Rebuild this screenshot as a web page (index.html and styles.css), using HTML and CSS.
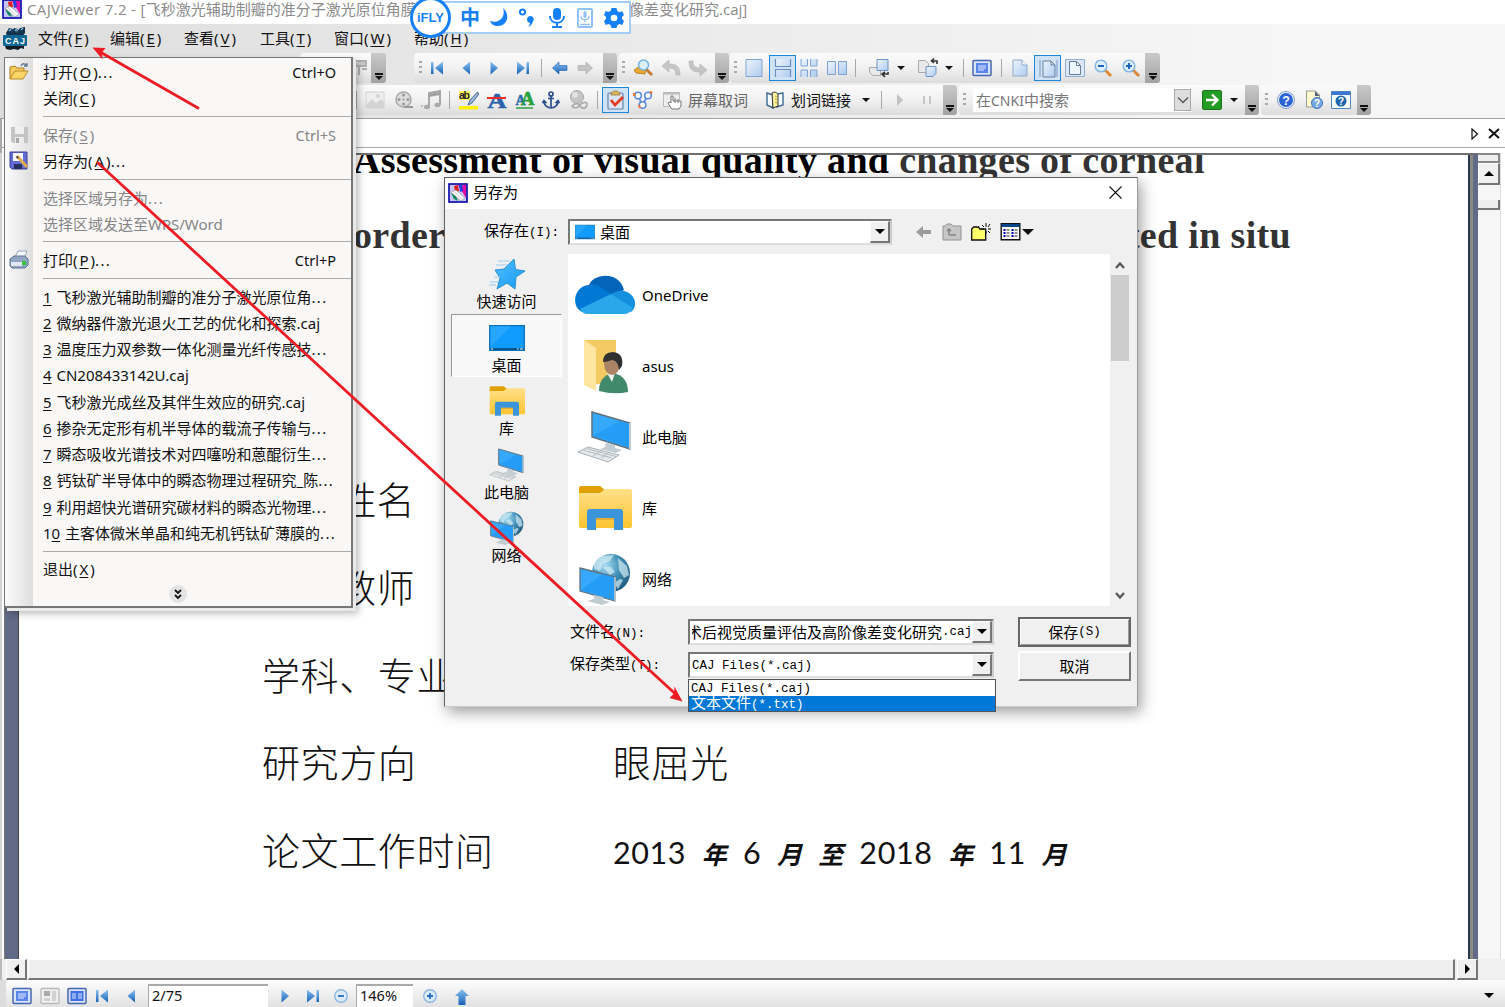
FILE: index.html
```html
<!DOCTYPE html>
<html lang="zh-CN">
<head>
<meta charset="utf-8">
<title>CAJViewer 7.2</title>
<link rel="stylesheet" href="styles.css">
</head>
<body>
<svg class="defs" width="0" height="0">
<defs>
<linearGradient id="gb" x1="0" y1="0" x2="0" y2="1"><stop offset="0" stop-color="#8cc4f0"/><stop offset="1" stop-color="#1560b8"/></linearGradient>
<linearGradient id="gp" x1="0" y1="0" x2="1" y2="1"><stop offset="0" stop-color="#eef5fd"/><stop offset="1" stop-color="#aecbee"/></linearGradient>
<linearGradient id="gy" x1="0" y1="0" x2="0" y2="1"><stop offset="0" stop-color="#ffe08a"/><stop offset="1" stop-color="#fcc42f"/></linearGradient>
<linearGradient id="gs" x1="0" y1="0" x2="1" y2="1"><stop offset="0" stop-color="#55bdff"/><stop offset="1" stop-color="#129bf5"/></linearGradient>
<radialGradient id="gl" cx=".35" cy=".3" r=".8"><stop offset="0" stop-color="#a9dcf2"/><stop offset=".5" stop-color="#3f8fb8"/><stop offset="1" stop-color="#1d5578"/></radialGradient>
<symbol id="app" viewBox="0 0 20 20"><rect x="1" y="1" width="18" height="18" fill="#c9c6f5" stroke="#0000a8" stroke-width="1.600"/><path d="M10 2h8v13z" fill="#e20aa0"/><path d="M6 3l4-1 1 6-4 1z" fill="#e02020"/><path d="M11 2l3 0 1 6-3 1z" fill="#2340e0"/><path d="M3 10l3 6 4 2-2-5z" fill="#108a5a"/><path d="M3 9l5-2 9 8-4 3z" fill="#fff" stroke="#777" stroke-width=".5"/><path d="M6 8.500l8 8" stroke="#999" stroke-width=".6"/></symbol>
<symbol id="caj" viewBox="0 0 24 24"><path d="M3 7l3-5 4 1-2 4 3-5 4 1-2 4 4-5 5-1v6l-3 4H4z" fill="#12324f"/><path d="M6 5l2-2M12 5l2-2M18 4l2-2" stroke="#7ac0ea" stroke-width="1.500"/><rect x="0" y="9" width="24" height="11" rx="1" fill="#0d6896"/><path d="M2 20h19v3l-3-1-3 2-4-1-4 1-4-1z" fill="#101c26"/><text x="12" y="18" text-anchor="middle" textLength="20" font-family="Liberation Sans" font-weight="bold" font-size="9" fill="#fff">CAJ</text></symbol>
<symbol id="left" viewBox="0 0 20 20"><path d="M14 3.500v13L6.500 10z" fill="url(#gb)"/></symbol>
<symbol id="right" viewBox="0 0 20 20"><path d="M6.500 3.500v13L14 10z" fill="url(#gb)"/></symbol>
<symbol id="first" viewBox="0 0 20 20"><path d="M4 4h2.500v12H4zM16 3.500v13L8 10z" fill="url(#gb)"/></symbol>
<symbol id="last" viewBox="0 0 20 20"><path d="M13.500 4H16v12h-2.500zM4 3.500v13l8-6.500z" fill="url(#gb)"/></symbol>
<symbol id="back" viewBox="0 0 20 20"><path d="M2.500 10L9 4v3.500h8v5H9V16z" fill="url(#gb)" stroke="#1c5fa8" stroke-width=".6"/></symbol>
<symbol id="fwd" viewBox="0 0 20 20"><path d="M17.500 10L11 4v3.500H3v5h8V16z" fill="#c4c4c4" stroke="#ababab" stroke-width=".6"/></symbol>
<symbol id="up" viewBox="0 0 20 20"><path d="M10 3l7 7h-3.500v9h-7v-9H3z" fill="url(#gb)"/></symbol>
<symbol id="find" viewBox="0 0 20 20"><path d="M1 12l6-4 6 3-1 5-9-1z" fill="#eda92e" stroke="#a86d10" stroke-width=".7"/><path d="M13 11l6 6" stroke="#c77a28" stroke-width="3"/><circle cx="10.500" cy="7" r="5" fill="#d9effb" stroke="#76b4dc" stroke-width="1.500"/></symbol>
<symbol id="undo" viewBox="0 0 20 20"><path d="M1 8l7-6v4c7 0 11 2 11 11h-4c0-5-2-7-7-7v4z" fill="#c6c6c6" stroke="#b0b0b0" stroke-width=".6"/></symbol>
<symbol id="redo" viewBox="0 0 20 20"><path d="M19 12l-7 6v-4C5 14 1 12 1 3h4c0 5 2 7 7 7V6z" fill="#c6c6c6" stroke="#b0b0b0" stroke-width=".6"/></symbol>
<symbol id="page" viewBox="0 0 20 20"><path d="M2 1.500h16v17H2z" fill="url(#gp)" stroke="#7fa4d4"/></symbol>
<symbol id="cont" viewBox="0 0 20 20"><path d="M2.500 1v7.500h15V1M2.500 19v-7.500h15V19" fill="url(#gp)" stroke="#6c8fc0" stroke-width="1.200"/></symbol>
<symbol id="quad" viewBox="0 0 20 20"><path d="M2 1v7h6.500V1M11.500 1v7H18V1M2 19v-7h6.500v7M11.500 19v-7H18v7" fill="url(#gp)" stroke="#7fa4d4"/></symbol>
<symbol id="two" viewBox="0 0 20 20"><path d="M.5 3.500h8v13h-8zM11.500 3.500h8v13h-8z" fill="url(#gp)" stroke="#7fa4d4"/></symbol>
<symbol id="rot" viewBox="0 0 20 20"><path d="M.5 9.500h11v8H4l-3.500-3z" fill="#e9e9e9" stroke="#aaa"/><path d="M8 1.500h11v11H8z" fill="url(#gp)" stroke="#6c94c8"/><path d="M19 14v2h-5m2-2l-3 2 3 3" fill="none" stroke="#333" stroke-width="1.600"/></symbol>
<symbol id="rot2" viewBox="0 0 20 20"><path d="M.5 2.500h7l3 3v9H.5z" fill="#e9e9e9" stroke="#aaa"/><path d="M8 8.500h10v7l-3 3H8z" fill="url(#gp)" stroke="#6c94c8"/><path d="M19 6V3h-5m2-2.500L13.500 3 16 5" fill="none" stroke="#333" stroke-width="1.600"/></symbol>
<symbol id="full" viewBox="0 0 20 20"><rect x="1" y="2.500" width="18" height="15" rx="1" fill="#d9e4fa" stroke="#4668b0" stroke-width="1.500"/><rect x="4" y="5" width="12" height="10" fill="#5a86ec"/><path d="M6 8h8M6 10h8M6 12h6" stroke="#e4edff"/></symbol>
<symbol id="full2" viewBox="0 0 20 20"><rect x="1" y="2.500" width="18" height="15" rx="1" fill="#d9e4fa" stroke="#4668b0" stroke-width="1.500"/><rect x="3.500" y="5" width="13" height="10" fill="#3f6fe0"/><path d="M5 8h4M5 10h4M5 12h4M11 8h4M11 10h4M11 12h4" stroke="#e4edff"/></symbol>
<symbol id="thumb" viewBox="0 0 20 20"><rect x="1" y="2.500" width="18" height="15" rx="1" fill="#efefef" stroke="#b9b9b9" stroke-width="1.300"/><path d="M4 5h6v5H4z" fill="#aaa"/><path d="M12 5h4v10h-4zM4 12h6v3H4z" fill="#d2d2d2"/></symbol>
<symbol id="doc" viewBox="0 0 20 20"><path d="M3 2h9l5 5v11H3z" fill="url(#gp)" stroke="#8fa9c9"/><path d="M12 2v5h5" fill="#fff" stroke="#8fa9c9"/></symbol>
<symbol id="fitw" viewBox="0 0 20 20"><path d="M5 3h8l4 4v12H5z" fill="url(#gp)" stroke="#69809d"/><path d="M13 3v4h4" fill="none" stroke="#69809d"/><path d="M2 2v17M19 2v17" stroke="#7697c4"/></symbol>
<symbol id="fitp" viewBox="0 0 20 20"><path d="M.5 1.500h19v17H.5z" fill="#dce8f6" stroke="#8fb0d4"/><path d="M4.500 3.500h7l4 4v9h-11z" fill="#eef6fd" stroke="#667f94"/><path d="M11.500 3.500v4h4" fill="none" stroke="#667f94"/></symbol>
<symbol id="zout" viewBox="0 0 20 20"><path d="M12 12l6 6" stroke="#dc8a3a" stroke-width="3"/><circle cx="8" cy="8" r="5.800" fill="#dff0fd" stroke="#89b9e6" stroke-width="1.600"/><path d="M5 8h6" stroke="#1c63c4" stroke-width="2"/></symbol>
<symbol id="zin" viewBox="0 0 20 20"><path d="M12 12l6 6" stroke="#dc8a3a" stroke-width="3"/><circle cx="8" cy="8" r="5.800" fill="#dff0fd" stroke="#89b9e6" stroke-width="1.600"/><path d="M5 8h6M8 5v6" stroke="#1c63c4" stroke-width="2"/></symbol>
<symbol id="minus" viewBox="0 0 20 20"><circle cx="10" cy="10" r="6.300" fill="#dcebfa" stroke="#8cb6e4" stroke-width="1.400"/><path d="M7 10h6" stroke="#2b6cc4" stroke-width="1.800"/></symbol>
<symbol id="plus" viewBox="0 0 20 20"><circle cx="10" cy="10" r="6.300" fill="#dcebfa" stroke="#8cb6e4" stroke-width="1.400"/><path d="M7 10h6M10 7v6" stroke="#2b6cc4" stroke-width="1.800"/></symbol>
<symbol id="hand" viewBox="0 0 20 20"><path d="M4 3h12v5H4zM9 8v9M1 5h3M12 11h5" fill="#ccc" stroke="#b0b0b0" stroke-width="2"/></symbol>
<symbol id="pic" viewBox="0 0 20 20"><path d="M1 2h18v16H1z" fill="#efefef" stroke="#d2d2d2"/><path d="M1 15l6-6 4 4 5-4 3 3v6H1z" fill="#d4d4d4"/><circle cx="13" cy="6" r="2" fill="#d4d4d4"/></symbol>
<symbol id="reel" viewBox="0 0 20 20"><circle cx="9.500" cy="9.500" r="7.500" fill="#ddd" stroke="#aaa" stroke-width="1.500"/><path d="M10 17h9" stroke="#999" stroke-width="2"/><g fill="#999"><circle cx="9.500" cy="5" r="1.500"/><circle cx="9.500" cy="14" r="1.500"/><circle cx="5" cy="9.500" r="1.500"/><circle cx="14" cy="9.500" r="1.500"/><circle cx="9.500" cy="9.500" r="1"/></g></symbol>
<symbol id="note" viewBox="0 0 20 20"><path d="M8 17V3l11-2v14" fill="none" stroke="#a0a0a0" stroke-width="1.800"/><path d="M8 4l11-2v3L8 7z" fill="#a0a0a0"/><ellipse cx="6" cy="17" rx="3" ry="2.200" fill="#aaa"/><ellipse cx="16.500" cy="15" rx="3" ry="2.200" fill="#aaa"/><circle cx="1" cy="16" r="1" fill="#aaa"/></symbol>
<symbol id="hl" viewBox="0 0 20 20"><path d="M0 1h11v9H0z" fill="#fff45c"/><text x="0" y="9" font-family="Liberation Sans" font-weight="bold" font-size="10.500" fill="#222" textLength="11">ab</text><path d="M18.500 2L11 10l-2 5 4-2 7-9z" fill="#9db7da" stroke="#3c5d90" stroke-width=".9"/><path d="M0 16h19v3.500H0z" fill="#fff200"/></symbol>
<symbol id="strike" viewBox="0 0 20 20"><text x="10" y="18" text-anchor="middle" font-family="Liberation Serif" font-weight="bold" font-size="22" textLength="19" lengthAdjust="spacingAndGlyphs" fill="#2a63ac" stroke="#2a63ac" stroke-width=".6">A</text><path d="M0 8h19" stroke="#ee2c2c" stroke-width="2"/></symbol>
<symbol id="wave" viewBox="0 0 20 20"><text x="5.500" y="15" text-anchor="middle" font-family="Liberation Serif" font-weight="bold" font-size="14" fill="#2a6ab0" stroke="#2a6ab0" stroke-width=".5">A</text><text x="12.500" y="15" text-anchor="middle" font-family="Liberation Serif" font-weight="bold" font-size="19" fill="#28a03c" stroke="#28a03c" stroke-width=".6">A</text><path d="M1 18h17" stroke="#28a03c" stroke-width="1.500"/></symbol>
<symbol id="anchor" viewBox="0 0 20 20"><circle cx="10" cy="4" r="2" fill="none" stroke="#2c4f8e" stroke-width="1.700"/><path d="M10 6v12M7 8.500h6M3 11c0 4 3 6.500 7 7 4-.5 7-3 7-7M1.500 13L3 10.500 5.500 13M18.500 13L17 10.500 14.500 13" fill="none" stroke="#2c4f8e" stroke-width="1.700"/></symbol>
<symbol id="globe" viewBox="0 0 20 20"><circle cx="8" cy="7" r="6.500" fill="#c4c4c4" stroke="#aaa"/><circle cx="6" cy="5" r="3" fill="#e1e1e1"/><path d="M3 16c3-3 6-3 8 0s6 3 7-1-5-3-7 0-6 4-8 1z" fill="none" stroke="#aaa" stroke-width="1.600"/></symbol>
<symbol id="clip" viewBox="0 0 20 20"><rect x="2" y="3" width="15" height="16" rx="1" fill="#dbe5f4" stroke="#6883ae" stroke-width="1.200"/><path d="M5 5V3l3-2h3l3 2v2z" fill="#dab55e" stroke="#91712a" stroke-width=".7"/><path d="M5 10l4 5 8-8" fill="none" stroke="#e23c20" stroke-width="2.800"/></symbol>
<symbol id="rings" viewBox="0 0 20 20"><path d="M5 6l4.500 9L15 5" fill="none" stroke="#6c97dc" stroke-width="2"/><g fill="#fff" stroke="#5a8bd8" stroke-width="1.600"><circle cx="5" cy="5.500" r="3.300"/><circle cx="15" cy="5.500" r="3.300"/><circle cx="9.500" cy="15" r="3.300"/></g><path d="M1 3v3M17 1.500l2 2M7 18l-1-3" stroke="#ef7432" stroke-width="2.200"/></symbol>
<symbol id="point" viewBox="0 0 20 20"><path d="M.5 2.500h16v14H.5z" fill="#eee" stroke="#bbb"/><path d="M.5 2.500h16v2H.5z" fill="#bbb"/><path d="M8 18l-3-5 2-1 1 1V6h2v5h8v5l-2 3H9z" fill="#fff" stroke="#777"/><path d="M12 8v5M15 9v4" stroke="#777"/></symbol>
<symbol id="book" viewBox="0 0 20 20"><path d="M2 3l6 2v13l-6-3zM18 3l-6 1v13l6-2z" fill="#f8fbff" stroke="#3c6a90" stroke-width="1.400"/><path d="M7 3c3-2 5 0 6 1v12l-5 2z" fill="#fbf2a0" stroke="#333"/><path d="M10 6l2 1M10 9l2 1M10 12l2 1" stroke="#bba72a"/></symbol>
<symbol id="play" viewBox="0 0 20 20"><path d="M7 4v12l6-6z" fill="#c2c2c2"/></symbol>
<symbol id="pause" viewBox="0 0 20 20"><path d="M7 6v8M13 6v8" stroke="#c6c6c6" stroke-width="2"/></symbol>
<symbol id="go" viewBox="0 0 20 20"><rect x=".5" y=".5" width="19" height="19" rx="1.500" fill="#249c24" stroke="#18761a"/><path d="M4 10h11M10 4.500l5.500 5.500-5.500 5.500" fill="none" stroke="#fff" stroke-width="2.300"/></symbol>
<symbol id="help" viewBox="0 0 20 20"><circle cx="10" cy="10" r="8.500" fill="#f4f8ff" stroke="#7d9bd0"/><circle cx="10" cy="10" r="7" fill="#2b62d8"/><text x="10" y="14.500" text-anchor="middle" font-family="Liberation Sans" font-weight="bold" font-size="12.500" fill="#fff">?</text></symbol>
<symbol id="dochelp" viewBox="0 0 20 20"><path d="M2.500 1h9l4 4v12h-13z" fill="#fffbd0" stroke="#9a9a90"/><path d="M11 1l4.500 5H11z" fill="#56627a"/><circle cx="13" cy="13" r="5.500" fill="#79a9e4" stroke="#3c74bc"/><text x="13" y="17" text-anchor="middle" font-family="Liberation Sans" font-weight="bold" font-size="10" fill="#fff">?</text></symbol>
<symbol id="winhelp" viewBox="0 0 20 20"><path d="M.5 1.500h19v17H.5z" fill="#f7fbff" stroke="#4d84bc"/><path d="M1 2h18v3H1z" fill="#3c77d4"/><circle cx="10" cy="11" r="5.500" fill="#1f65ac"/><text x="10" y="15" text-anchor="middle" font-family="Liberation Sans" font-weight="bold" font-size="10" fill="#fff">?</text></symbol>
<symbol id="open" viewBox="0 0 20 20"><path d="M1 17V5l5-1 2 2h7v3" fill="#f4cc62" stroke="#b08018"/><path d="M1 17l5-8h13l-5 8z" fill="#ffd566" stroke="#b98a28"/><path d="M12 4c1-3 4-3 6 0m0-3v3h-3" fill="none" stroke="#5e7894" stroke-width="1.300"/></symbol>
<symbol id="saveg" viewBox="0 0 20 20"><path d="M2 2h17v16H4l-2-2z" fill="#c4c4c4"/><path d="M6 2h9v7H6z" fill="#f0f0f0"/><path d="M6 12h9v6H6z" fill="#ececec"/><path d="M7 13h3v5H7z" fill="#aaa"/></symbol>
<symbol id="saveas" viewBox="0 0 20 20"><path d="M1 1h17v17H3l-2-2z" fill="#646bd2" stroke="#3b4195"/><path d="M4 2h10v8H4z" fill="#f5f6ff"/><path d="M5 13h8v5H5z" fill="#25305c"/><path d="M8 5l10 11" stroke="#e0ad4f" stroke-width="3"/><path d="M7 5l3 1-2 2z" fill="#333"/></symbol>
<symbol id="print" viewBox="0 0 20 20"><path d="M6 7l3-6h9l-3 8z" fill="#f7f9fc" stroke="#93a4bd"/><path d="M1 9l4-3h11l3 3v6l-3 3H3l-2-2z" fill="#91a5c2" stroke="#5f7393"/><path d="M2 12h11v4H2z" fill="#e2e8f1"/><path d="M13 11h4v4h-4z" fill="#34c634"/></symbol>
<symbol id="star" viewBox="0 0 36 32"><path d="M25 1l1.500 10.500L36 13l-9 6-1 12-8-6-10 6 3-11-5-8 9-1z" fill="url(#gs)" stroke="#2a8fd0"/><path d="M9 3h12M7 7h12M1 24h8M0 27h7M5 19h6" stroke="#95cdf2" stroke-width="1.200"/></symbol>
<symbol id="desk" viewBox="0 0 36 32"><path d="M.7 3.700h34.600v24.600H.7z" fill="#109bff" stroke="#0a70b6" stroke-width="1.300"/><path d="M1.500 25L22 4H1.500z" fill="#35adff" opacity=".6"/><path d="M1 27h34" stroke="#0b426c" stroke-width="1.500"/><path d="M2 27h2M28 27h1.500M31 27h3" stroke="#eff"/></symbol>
<symbol id="lib" viewBox="0 0 54 46"><path d="M1 3q0-2 2-2h19l5 4-3 4H1z" fill="#dfa000"/><path d="M1 8h21l5-4h25q2 0 2 2v35q0 2-2 2H3q-2 0-2-2z" fill="url(#gy)"/><path d="M9 45V27q0-3 3-3h30q3 0 3 3v18h-9V33H18v12z" fill="#3c94da"/><path d="M18 33h18v2H18z" fill="#c4851a" opacity=".4"/></symbol>
<symbol id="pc" viewBox="0 0 56 52"><path d="M15 1l38 11v26L15 26z" fill="#35a8fb" stroke="#60717d" stroke-width="1.500"/><path d="M16 25l27-15 9 3v23z" fill="#1b96f4" opacity=".6"/><path d="M53 12v26" stroke="#c1ccd2" stroke-width="2"/><path d="M29 31l9 3v3l7 2-6 3-16-4 5-2z" fill="#c2ccd3"/><path d="M1 41l10-5 31 8-11 7z" fill="#e7eaec" stroke="#aab1b6"/><path d="M6 39l29 8M10 37.500l29 8M16 45l9-6M24 47l9-6" stroke="#adb5ba" stroke-width=".9"/></symbol>
<symbol id="net" viewBox="0 0 52 52"><circle cx="32" cy="20" r="19" fill="url(#gl)"/><path d="M15 10l8-7 12-1-4 6-7 3-3 7-6-2zM39 5l9 8 2 9-5 3-5-8zM24 14l8 0 4 5-5 3zM35 30l6-4 3 1-5 9z" fill="#d4edf2" opacity=".7"/><path d="M1 15l35 9v24L1 38z" fill="#35a8fb" stroke="#60717d" stroke-width="1.300"/><path d="M2 37l22-16 11 3v23z" fill="#1b96f4" opacity=".6"/><path d="M36 24v24" stroke="#c1ccd2" stroke-width="1.500"/><path d="M15 42l9 2v3l7 2-8 3-15-4 7-2z" fill="#c2ccd3"/></symbol>
<symbol id="cloud" viewBox="0 0 60 40"><path d="M14 10C19-2 44-4 49 15L30 25z" fill="#0364b8"/><path d="M12 38C-5 37-3 12 13 10c8-2 12 1 23 9z" fill="#0078d4"/><path d="M36 19c18-11 31 9 20 18z" fill="#1490df"/><path d="M5 34l31-15 22 14c-2 4-5 6-10 6H12c-3 0-5-2-7-5z" fill="#28a8ea"/></symbol>
<symbol id="user" viewBox="0 0 48 56"><path d="M3 2h32v44H14z" fill="#f3cb62"/><path d="M3 2l12 8v43L3 47z" fill="#ffe6a0"/><path d="M18 53q0-15 14-18 15 3 15 19-14 3-29-1z" fill="#40896a"/><path d="M26 35l5 9 3-9z" fill="#f1f1ed"/><ellipse cx="31" cy="26" rx="8" ry="11" fill="#aa8465"/><path d="M22 24q0-10 10-10 11 1 9 14l-3 4q-1-10-7-10-5 2-9 2z" fill="#303030"/></symbol>
<symbol id="gback" viewBox="0 0 20 20"><path d="M2 10l7-6v4h8v4H9v4z" fill="#9b9b9b"/></symbol>
<symbol id="gup" viewBox="0 0 20 20"><path d="M1 18V4h2l2-2h4l2 2h8v14z" fill="#c6c6c6" stroke="#929292"/><path d="M7 13V7M5 9l2-2 2 2M7 13h7" fill="none" stroke="#858585" stroke-width="1.500"/></symbol>
<symbol id="newf" viewBox="0 0 20 20"><path d="M.7 18V7l2-2h5l1 2h6v11z" fill="#ffff6b" stroke="#111" stroke-width="1.300"/><path d="M15 1v4M15 9v3M10 7h3M17 7h3M11 3l2 2M19 2l-2 3M19 11l-2-2" stroke="#111" stroke-width="1"/></symbol>
<symbol id="view" viewBox="0 0 20 20"><path d="M.7 1.700h18.600v16H.7z" fill="#fff" stroke="#111" stroke-width="1.400"/><path d="M1 2h18v3H1z" fill="#0a4688"/><path d="M3 8h2M3 11h2M3 14h2M11 8h2M11 11h2M11 14h2" stroke="#0000aa" stroke-width="2"/><path d="M6 8h3M6 11h3M6 14h3M14 8h3M14 11h3M14 14h3" stroke="#222"/></symbol>
<symbol id="moon" viewBox="0 0 20 20"><path d="M14 0c8 7 4 18-5 18-4 0-7-2-8-5 9 3 16-4 13-13z" fill="#1580f8"/></symbol>
<symbol id="punc" viewBox="0 0 20 20"><circle cx="4.500" cy="4" r="2.600" fill="none" stroke="#1580f8" stroke-width="2"/><path d="M9 11a3.400 3.400 0 1 1 6 2.500c-1 3-3 5-5 5.500 1-1 2-3 2-4-2-.3-3-2-3-4z" fill="#1580f8"/></symbol>
<symbol id="mic" viewBox="0 0 20 20"><rect x="6" y="0" width="8" height="12" rx="4" fill="#1580f8"/><path d="M3 8c0 9 14 9 14 0M10 15v4M5 19h10" fill="none" stroke="#1580f8" stroke-width="2"/></symbol>
<symbol id="tab" viewBox="0 0 20 20"><rect x="3" y="1" width="14" height="18" rx="1" fill="none" stroke="#8fc2fa" stroke-width="2"/><rect x="8.500" y="3" width="3" height="7" rx="1.500" fill="#8fc2fa"/><path d="M6 8c0 5 8 5 8 0M10 12v2M5 16.500h10" fill="none" stroke="#8fc2fa" stroke-width="1.300"/></symbol>
<symbol id="gear" viewBox="0 0 20 20"><path d="M7.500 0h5l.8 3 2 1.200 3-1L20 7l-2 2v2l2 2-1.700 4-3-1-2 1.200-.8 3h-5l-.8-3-2-1.200-3 1L0 13l2-2V9L0 7l1.700-4 3 1 2-1.200zM10 6.700a3.300 3.300 0 1 0 0 6.600 3.300 3.300 0 0 0 0-6.600z" fill="#1580f8" fill-rule="evenodd"/></symbol>
</defs>
</svg>

<div class="window">
  <header class="titlebar">
    <svg class="i20"><use href="#app"/></svg>
    <span class="title-a"><span class="t-lat">CAJViewer 7.2 - [</span>飞秒激光辅助制瓣的准分子激光原位角膜</span>
    <span>像差变化研究.caj]</span>
  </header>

  <div class="rebar">
    <nav class="menubar">
      <svg class="i24"><use href="#caj"/></svg>
      <span>文件(<u>F</u>)</span><span>编辑(<u>E</u>)</span><span>查看(<u>V</u>)</span><span>工具(<u>T</u>)</span><span>窗口(<u>W</u>)</span><span>帮助(<u>H</u>)</span>
    </nav>
    <div class="bars">
      <div class="tb r1a"><svg class="i20"><use href="#hand"/></svg><b class="more"></b></div>
      <div class="tb r1b"><b class="grip"></b><svg class="i20"><use href="#first"/></svg><svg class="i20"><use href="#left"/></svg><svg class="i20"><use href="#right"/></svg><svg class="i20"><use href="#last"/></svg><b class="sep"></b><svg class="i20"><use href="#back"/></svg><svg class="i20"><use href="#fwd"/></svg><b class="more"></b></div>
      <div class="tb r1c"><b class="grip"></b><svg class="i20"><use href="#find"/></svg><svg class="i20"><use href="#undo"/></svg><svg class="i20"><use href="#redo"/></svg><b class="more"></b></div>
      <div class="tb r1d"><b class="grip"></b><svg class="i20"><use href="#page"/></svg><span class="on"><svg class="i20"><use href="#cont"/></svg></span><svg class="i20"><use href="#quad"/></svg><svg class="i20"><use href="#two"/></svg><b class="sep"></b><svg class="i20"><use href="#rot"/></svg><b class="dd"></b><svg class="i20"><use href="#rot2"/></svg><b class="dd"></b><b class="sep"></b><svg class="i20"><use href="#full"/></svg><b class="sep"></b><svg class="i20"><use href="#doc"/></svg><span class="on"><svg class="i20"><use href="#fitw"/></svg></span><svg class="i20"><use href="#fitp"/></svg><svg class="i20"><use href="#zout"/></svg><svg class="i20"><use href="#zin"/></svg><b class="more"></b></div>
    </div>
    <div class="bars">
      <div class="tb r2a"><b class="sep"></b><svg class="i20"><use href="#pic"/></svg><svg class="i20"><use href="#reel"/></svg><svg class="i20"><use href="#note"/></svg><b class="sep"></b><svg class="i20"><use href="#hl"/></svg><svg class="i20"><use href="#strike"/></svg><svg class="i20"><use href="#wave"/></svg><svg class="i20"><use href="#anchor"/></svg><svg class="i20"><use href="#globe"/></svg><b class="sep"></b><span class="on"><svg class="i20"><use href="#clip"/></svg></span><svg class="i20"><use href="#rings"/></svg><svg class="i20"><use href="#point"/></svg><span class="dim">屏幕取词</span><svg class="i20"><use href="#book"/></svg><span>划词链接</span><b class="dd"></b><b class="sep"></b><svg class="i20"><use href="#play"/></svg><svg class="i20"><use href="#pause"/></svg><b class="more"></b></div>
      <div class="tb r2b"><b class="grip"></b><div class="search"><span>在<i>CNKI</i>中搜索</span><div class="drop"><svg width="12" height="8" viewBox="0 0 12 8"><path d="M1 1.500l5 5 5-5" fill="none" stroke="#555" stroke-width="1.300"/></svg></div></div><svg class="i20"><use href="#go"/></svg><b class="dd"></b><b class="more"></b></div>
      <div class="tb r2c"><b class="grip"></b><svg class="i20"><use href="#help"/></svg><svg class="i20"><use href="#dochelp"/></svg><svg class="i20"><use href="#winhelp"/></svg><b class="more"></b></div>
    </div>
  </div>

  <div class="tabstrip">
    <svg width="8" height="12" viewBox="0 0 8 12"><path d="M1 1v10l5.500-5z" fill="none" stroke="#111" stroke-width="1.200"/></svg>
    <svg width="12" height="11" viewBox="0 0 12 11"><path d="M1 1l10 9M11 1L1 10" stroke="#111" stroke-width="2"/></svg>
  </div>

  <div class="workspace">
    <div class="gutter"></div>
    <main class="page">
      <div class="en l1">Assessment of visual quality and <span>changes of corneal</span></div>
      <div class="en l2"><span>order</span><span>ted in situ</span></div>
      <div class="rows">
        <div class="row"><span class="half">姓名</span></div>
        <div class="row"><span class="half">教师</span></div>
        <div class="row"><span>学科、专业</span></div>
        <div class="row"><span>研究方向</span><span>眼屈光</span></div>
        <div class="row"><span>论文工作时间</span><span class="date">2013 <em>年</em> 6 <em>月</em> <em>至</em> 2018 <em>年</em> 11 <em>月</em></span></div>
      </div>
    </main>
    <div class="edge"></div>
    <div class="vscroll"><b class="split"></b><b class="btn"><i class="tri-up"></i></b><b class="vthumb"></b></div>
    <div class="rim"></div>
  </div>

  <div class="hscroll"><b class="btn"><i class="tri-left"></i></b><b class="hthumb"></b><b class="btn"><i class="tri-right"></i></b></div>

  <footer class="status">
    <svg class="i20"><use href="#full"/></svg><svg class="i20"><use href="#thumb"/></svg><svg class="i20"><use href="#full2"/></svg><svg class="i20"><use href="#first"/></svg><svg class="i20"><use href="#left"/></svg>
    <span class="field">2/75</span>
    <svg class="i20"><use href="#right"/></svg><svg class="i20"><use href="#last"/></svg><svg class="i20"><use href="#minus"/></svg>
    <span class="field zoom">146%</span>
    <svg class="i20"><use href="#plus"/></svg><svg class="i20"><use href="#up"/></svg>
    <b class="corner"><i class="tri-down"></i></b>
  </footer>
</div>

<section class="filemenu">
  <div class="mi"><svg class="i20"><use href="#open"/></svg><span>打开(<u>O</u>)<i>...</i></span><span>Ctrl+O</span></div>
  <div class="mi"><b></b><span>关闭(<u>C</u>)</span></div>
  <hr>
  <div class="mi off"><svg class="i20"><use href="#saveg"/></svg><span>保存(<u>S</u>)</span><span>Ctrl+S</span></div>
  <div class="mi"><svg class="i20"><use href="#saveas"/></svg><span>另存为(<u>A</u>)<i>...</i></span></div>
  <hr>
  <div class="mi off"><b></b><span>选择区域另存为<i>...</i></span></div>
  <div class="mi off"><b></b><span>选择区域发送至WPS/Word</span></div>
  <hr>
  <div class="mi"><svg class="i20"><use href="#print"/></svg><span>打印(<u>P</u>)<i>...</i></span><span>Ctrl+P</span></div>
  <hr>
  <div class="recent">
  <div class="mi"><b></b><span><u>1</u> 飞秒激光辅助制瓣的准分子激光原位角<i>...</i></span></div>
  <div class="mi"><b></b><span><u>2</u> 微纳器件激光退火工艺的优化和探索.caj</span></div>
  <div class="mi"><b></b><span><u>3</u> 温度压力双参数一体化测量光纤传感技<i>...</i></span></div>
  <div class="mi"><b></b><span><u>4</u> CN208433142U.caj</span></div>
  <div class="mi"><b></b><span><u>5</u> 飞秒激光成丝及其伴生效应的研究.caj</span></div>
  <div class="mi"><b></b><span><u>6</u> 掺杂无定形有机半导体的载流子传输与<i>...</i></span></div>
  <div class="mi"><b></b><span><u>7</u> 瞬态吸收光谱技术对四噻吩和蒽醌衍生<i>...</i></span></div>
  <div class="mi"><b></b><span><u>8</u> 钙钛矿半导体中的瞬态物理过程研究_陈<i>...</i></span></div>
  <div class="mi"><b></b><span><u>9</u> 利用超快光谱研究碳材料的瞬态光物理<i>...</i></span></div>
  <div class="mi"><b></b><span>1<u>0</u> 主客体微米单晶和纯无机钙钛矿薄膜的<i>...</i></span></div>
  </div>
  <hr>
  <div class="mi"><b></b><span>退出(<u>X</u>)</span></div>
  <div class="expand"><svg width="18" height="18" viewBox="0 0 18 18"><circle cx="9" cy="9" r="9" fill="#e3e3e3"/><path d="M6 5l3 3 3-3M6 10l3 3 3-3" fill="none" stroke="#111" stroke-width="1.800"/></svg></div>
</section>

<section class="dialog">
  <header class="dtitle"><svg class="i20"><use href="#app"/></svg><span>另存为</span><svg width="13" height="13" viewBox="0 0 13 13"><path d="M.5.5l12 12M12.500.5l-12 12" stroke="#111" stroke-width="1.100"/></svg></header>
  <div class="lookin">
    <span>保存在<i>(I):</i></span>
    <div class="combo"><svg class="i20"><use href="#desk"/></svg><span>桌面</span><b class="btn"><i class="tri-down"></i></b></div>
    <svg class="i20"><use href="#gback"/></svg><svg class="i20"><use href="#gup"/></svg><svg class="i20"><use href="#newf"/></svg><svg class="i21"><use href="#view"/></svg><b class="dd big"></b>
  </div>
  <div class="browse">
    <div class="places">
      <div class="place"><svg><use href="#star"/></svg><span>快速访问</span></div>
      <div class="place sel"><svg><use href="#desk"/></svg><span>桌面</span></div>
      <div class="place"><svg><use href="#lib"/></svg><span>库</span></div>
      <div class="place"><svg><use href="#pc"/></svg><span>此电脑</span></div>
      <div class="place"><svg><use href="#net"/></svg><span>网络</span></div>
    </div>
    <div class="list">
      <div class="entry"><svg width="60" height="40"><use href="#cloud"/></svg><span>OneDrive</span></div>
      <div class="entry"><svg width="48" height="56"><use href="#user"/></svg><span>asus</span></div>
      <div class="entry"><svg width="56" height="52"><use href="#pc"/></svg><span>此电脑</span></div>
      <div class="entry"><svg width="54" height="46"><use href="#lib"/></svg><span>库</span></div>
      <div class="entry"><svg width="52" height="52"><use href="#net"/></svg><span>网络</span></div>
    </div>
    <div class="lscroll"><svg width="12" height="10" viewBox="0 0 12 10"><path d="M2 8l4-4.500L10 8" fill="none" stroke="#555" stroke-width="2.200"/></svg><b></b><svg width="12" height="10" viewBox="0 0 12 10"><path d="M2 2l4 4.500L10 2" fill="none" stroke="#555" stroke-width="2.200"/></svg></div>
  </div>
  <div class="frow"><span>文件名<i>(N):</i></span><div class="combo"><span class="clip">术后视觉质量评估及高阶像差变化研究<i>.caj</i></span><b class="btn"><i class="tri-down"></i></b></div><div class="push main">保存<i>(S)</i></div></div>
  <div class="frow second"><span>保存类型<i>(T):</i></span><div class="combo"><span><i>CAJ Files(*.caj)</i></span><b class="btn"><i class="tri-down"></i></b></div><div class="push">取消</div></div>
  <div class="options"><div><i>CAJ Files(*.caj)</i></div><div class="hot">文本文件<i>(*.txt)</i></div></div>
</section>

<div class="ime"><div class="ifly"><span>iFLY</span></div><b>中</b><svg class="i20"><use href="#moon"/></svg><svg class="i20"><use href="#punc"/></svg><svg class="i20"><use href="#mic"/></svg><svg class="i20"><use href="#tab"/></svg><svg class="i20"><use href="#gear"/></svg></div>

<svg class="marks" width="1505" height="1007"><g stroke="#ed1c24" stroke-width="2.800" stroke-linecap="round"><path d="M198 108L101 52.500M98 163L676 694.500"/></g><g fill="#ed1c24"><path d="M92.500 47.500l13 .5-3.500 4.500 .5 7z"/><path d="M682.500 701.500l-13-3.500 4.500-4.500.5-7z"/></g></svg>
</body>
</html>
```

FILE: styles.css
```css
* { box-sizing: border-box; }
body { margin: 0; width: 1505px; height: 1007px; overflow: hidden; position: relative; background: #fff;
  font: 15px/20px "Noto Sans", "Noto Sans CJK SC", sans-serif; color: #111; white-space: nowrap; }
.defs { position: absolute; }
svg { display: block; flex: none; }
.i20 { width: 20px; height: 20px; }
.i21 { width: 21px; height: 20px; }
.i24 { width: 24px; height: 24px; }
i, em { font-style: normal; }
u { text-decoration-thickness: 1px; text-underline-offset: 2px; }
.window { height: 1007px; display: flex; flex-direction: column; }

.titlebar { height: 24px; display: flex; align-items: flex-start; padding-left: 2px; color: #8b8b8b; font-family: "Open Sans", "Noto Sans CJK SC", sans-serif; line-height: 18px; }
.titlebar .i20 { margin: -1px 5px 0 0; }
.titlebar .title-a { width: 602px; }
.t-lat { letter-spacing: .35px; }

.rebar { height: 95px; background: linear-gradient(90deg, #dedede, #f6f6f6 85%); border-bottom: 1px solid #a0a0a0; }
.menubar { height: 29px; display: grid; grid-template-columns: 35px 72px 74px 76px 74px 80px 80px; align-items: center; padding: 0 0 2px 3px; font-size: 15px; }
.menubar u, .filemenu u { margin: 0 2px; }
.bars { height: 32px; display: flex; }
.tb { height: 30px; display: grid; align-items: center; background: linear-gradient(#fbfbfb, #f1f1f1 50%, #dcdcdc); border-radius: 4px; }
.r1a { width: 86px; margin-left: 300px; padding-left: 50px; grid-template-columns: 21px 15px; }
.r1b { width: 203px; margin-left: 28px; padding-left: 5px; grid-template-columns: 8px 29px 28px 29px 28px 9px 25px 28px 14px; }
.r1c { width: 110px; margin-left: 2px; padding-left: 3px; grid-template-columns: 11px 28px 27px 27px 14px; }
.r1d { width: 430px; margin-left: 1px; padding-left: 4px; grid-template-columns: 10px 25px 30px 28px 28px 14px 28px 21px 27px 18px 9px 29px 9px 24px 31px 28px 28px 24px 15px; }
.r2a { width: 657px; margin-left: 300px; padding-left: 56px; grid-template-columns: 9px 29px 27px 28px 10px 28px 28px 26px 28px 28px 5px 31px 30px 25px 77px 26px 71px 19px 9px 27px 26px 14px; }
.r2b { width: 300px; margin-left: 2px; padding-left: 4px; grid-template-columns: 10px 229px 28px 15px 14px; }
.r2c { width: 110px; margin-left: 2px; padding-left: 4px; grid-template-columns: 11px 28px 27px 26px 14px; }
.grip { width: 3px; height: 14px; background: repeating-linear-gradient(#aaa 0 2px, transparent 2px 5px); }
.sep { width: 1px; height: 18px; background: #a8a8a8; }
.dd { width: 8px; border: 4px solid transparent; border-top: 4px solid #111; border-bottom: 0; }
.dd.big { width: 12px; border-width: 6px 6px 0; }
.more { height: 30px; background: linear-gradient(#c9c9c9, #a2a2a2); border-radius: 0 3px 3px 0; display: flex; flex-direction: column; align-items: center; justify-content: flex-end; padding-bottom: 3px; gap: 1px; }
.more::before { content: ""; width: 8px; height: 2px; background: #111; }
.more::after { content: ""; border: 4px solid transparent; border-top-color: #111; border-bottom: 0; }
.on { width: 27px; height: 26px; background: #cfe3f5; border: 1.500px solid #1c86d8; display: flex; align-items: center; justify-content: center; }
.dim { color: #666; }
.search { width: 218px; height: 24px; background: #fff; display: flex; align-items: center; justify-content: space-between; padding-left: 3px; color: #777; }
.search i { font-size: 14px; }
.drop { width: 17px; height: 22px; background: #ddd; border: 1px solid #aaa; display: flex; align-items: center; justify-content: center; }

.tabstrip { height: 34px; background: linear-gradient(#fff 28px, #aaa 28px 29.500px, #fff 29.500px); border-left: 2px solid #aaa; display: flex; justify-content: flex-end; align-items: flex-start; gap: 9px; padding: 9px 5px 0 0; }
.workspace { height: 806px; display: flex; }
.gutter { width: 19px; background: linear-gradient(90deg, #d5d5d5 0 2px, #fff 2px 4px, #777 4px 5px, #616a86 5px 18px, #444 18px); flex: none; }
.page { width: 1449px; background: #fff; border-top: 2px solid #707070; overflow: hidden; flex: none; }
.en { font: bold 38px/44px "Liberation Serif", serif; letter-spacing: .33px; color: #000; }
.en span { color: #333; }
.l1 { margin: -17px 0 0 334px; }
.l2 { margin: 31px 0 0 334px; width: 938px; display: flex; justify-content: space-between; }
.rows { padding: 197px 0 0 243px; font: 300 38px/88px "Noto Sans CJK SC", sans-serif; letter-spacing: .6px; color: #111; }
.row { height: 87.800px; display: grid; grid-template-columns: 351px auto; }
.half { padding-left: 76px; }
.date { font: 30.500px/95px Lato, "Noto Sans CJK SC", sans-serif; letter-spacing: .6px; word-spacing: 7.200px; }
.date em { font-weight: 700; font-style: italic; font-size: 25px; }
.edge { width: 10px; background: linear-gradient(90deg, #26374f 0 2px, #8a8a82 2px 5px, #616a86 5px); flex: none; border-top: 2px solid #707070; }
.vscroll { width: 22px; background: #f6f6f6; border-top: 2px solid #888; flex: none; display: flex; flex-direction: column; }
.split { height: 8px; border-right: 2px solid #888; border-bottom: 2px solid #888; background: #eee; }
.btn { background: #f0f0f0; border: 1px solid #fff; border-right: 2px solid #777; border-bottom: 2px solid #777; display: flex; align-items: center; justify-content: center; flex: none; }
.vscroll .btn { height: 22px; }
.vthumb { margin-top: 15px; height: 10px; flex: none; background: #eee; border-right: 2px solid #777; border-bottom: 2px solid #777; }
.tri-up { border: 5px solid transparent; border-bottom-color: #000; border-top: 0; }
.tri-down { border: 5px solid transparent; border-top-color: #000; border-bottom: 0; }
.tri-left { border: 5px solid transparent; border-right-color: #000; border-left: 0; }
.tri-right { border: 5px solid transparent; border-left-color: #000; border-right: 0; }
.rim { flex: 1; background: #fff; border-left: 1px solid #ddd; }
.hscroll { height: 21px; display: flex; padding: 0 27px 0 4px; background: #f0f0f0; border-left: 2px solid #bbb; }
.hscroll .btn { width: 21px; }
.hthumb { flex: 1; margin: 0 2px 0 1px; background: #efefef; border: 1px solid #fff; border-right: 2px solid #777; border-bottom: 2px solid #777; }
.status { height: 27px; background: linear-gradient(#fdfdfd, #e2e2e2); border-left: 6px solid #ddd; display: grid; grid-template-columns: 28px 27px 25px 29px 27px 127px 28px 28px 25px 64px 32px 1027px 20px; align-items: center; padding: 4px 0 0 6px; font-size: 14.500px; }
.field { width: 120px; background: #fff; height: 23px; border-top: 2px solid #aaa; border-left: 1px solid #aaa; padding-left: 3px; line-height: 18px; }
.field.zoom { width: 57px; }
.corner { display: flex; justify-content: center; }

.filemenu { position: absolute; left: 4px; top: 57px; width: 349px; height: 551px; padding: 1px 0 0; border: 1px solid #777; border-right-width: 2px; border-bottom-width: 2px; background: linear-gradient(90deg, #fbfbfb, #dedede 28px, #f9f8f7 28px); box-shadow: 3px 3px 0 #e9e9e9, 5px 5px 8px rgba(0,0,0,.3); }
.mi { height: 26.250px; display: grid; grid-template-columns: 34px 1fr auto; align-items: center; padding: 0 15px 0 4px; }
.mi i { letter-spacing: 1.300px; }
.mi > span:nth-child(3) { font-size: 14.500px; }
.recent u { margin: 0 1px 0 0; }
.mi.off { color: #858585; }
.filemenu hr { height: 1px; margin: 4.600px 0; margin-left: 38px; border: 0; background: #aaa; }
.expand { display: flex; justify-content: center; padding-top: 3px; }

.dialog { position: absolute; left: 444px; top: 177px; width: 694px; height: 530px; background: #f0f0f0; border: 1px solid #606060; border-right-color: #999; border-bottom-color: #ccc; box-shadow: 3px 5px 14px rgba(0,0,0,.38); color: #000; }
.dialog i { font-family: "Liberation Mono", monospace; font-size: 12.500px; }
.dtitle { height: 31px; background: #fff; display: flex; align-items: center; padding: 0 15px 2px 3px; gap: 5px; }
.dtitle span { padding-bottom: 2px; }
.dtitle svg:last-child { margin-left: auto; }
.lookin { height: 45px; display: grid; grid-template-columns: 84px 346px 28px 29px 29px 22px 12px; align-items: center; padding-left: 39px; }
.combo { background: #fff; border: 2px solid #777; border-right-color: #ccc; border-bottom-color: #ddd; display: flex; align-items: center; justify-content: space-between; }
.combo > .btn { width: 20px; height: 22px; }
.lookin .combo { width: 324px; height: 26px; padding-left: 5px; }
.lookin .combo span { flex: 1; padding-left: 5px; }
.browse { height: 352px; display: flex; padding-left: 6px; }
.places { width: 117px; margin-top: -4px; }
.place { width: 111px; height: 63.500px; display: flex; flex-direction: column; align-items: center; padding-top: 7px; }
.place svg { width: 36px; height: 34px; }
.sel { background: #f8f8f8; border: 1px solid #999; border-right-color: #fff; border-bottom-color: #fff; padding-top: 6px; }
.list { width: 542px; background: #fff; padding-top: 5px; }
.entry { height: 71px; display: grid; grid-template-columns: 74px auto; align-items: center; }
.entry svg { justify-self: center; }
.lscroll { width: 20px; background: #f0f0f0; display: flex; flex-direction: column; align-items: center; padding: 6px 0 5px; }
.lscroll b { width: 18px; height: 86px; background: #cdcdcd; margin-top: 5px; margin-bottom: auto; }
.frow { height: 30px; margin-top: 11px; display: grid; grid-template-columns: 118px 330px 113px; align-items: center; padding-left: 125px; }
.frow.second { margin-top: 4px; }
.frow.second > span, .frow.second .combo { margin-top: -3px; }
.frow .combo { width: 306px; height: 26px; padding-left: 2px; }
.clip { width: 280px; overflow: hidden; display: flex; justify-content: flex-end; }
.push { height: 30px; background: #f0f0f0; border: 2px solid #fff; border-right-color: #777; border-bottom-color: #777; display: flex; align-items: center; justify-content: center; }
.push.main { border: 2px solid #666; box-shadow: inset 1px 1px #fff, inset -1px -1px #999; }
.options { position: absolute; left: 243px; top: 501px; width: 308px; height: 33px; border: 1px solid #555; background: #fff; line-height: 13px; }
.options div { height: 15.500px; padding-left: 2px; }
.options .hot { background: #0078d7; color: #fff; }

.ime { position: absolute; left: 430px; top: 1px; width: 201px; height: 33px; background: #fff; border: 2px solid #a6ccf8; display: grid; grid-template-columns: 29px 29px 29px 28px 29px 20px; align-items: center; padding-left: 28px; color: #1580f8; }
.ime > b { font-size: 20px; }
.ifly { position: absolute; left: -22px; top: -6px; width: 41px; height: 41px; border: 3px solid #1580f8; border-radius: 50%; background: #fff; display: flex; align-items: center; justify-content: center; font: bold 13px "Liberation Sans", sans-serif; }
.marks { position: absolute; left: 0; top: 0; }
```
